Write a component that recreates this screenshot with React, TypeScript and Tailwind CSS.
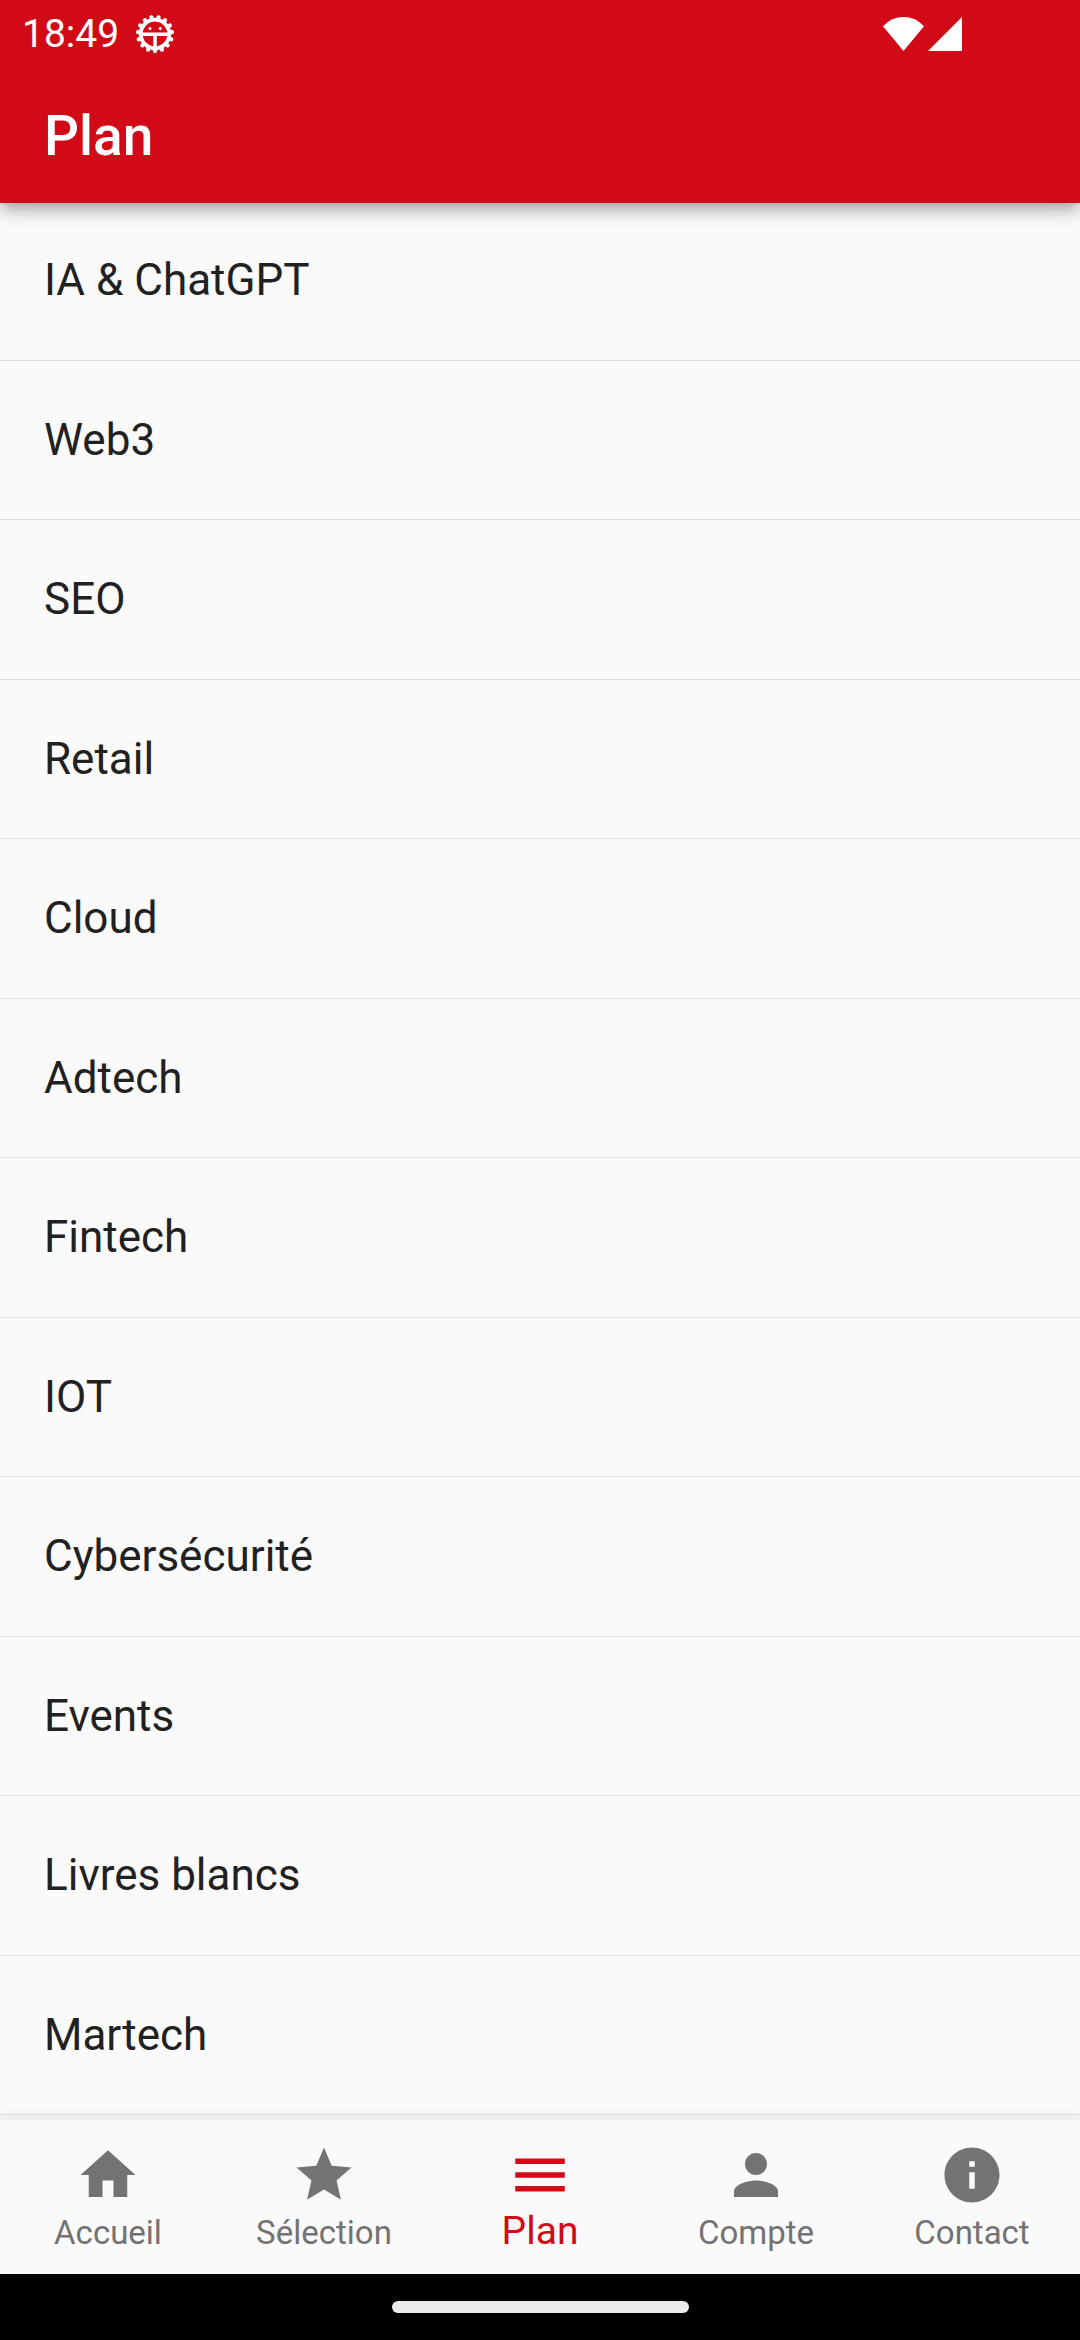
import { useState } from 'react';
import type { IconType } from 'react-icons';
import { MdHome, MdInfo, MdMenu, MdPerson, MdStar } from 'react-icons/md';

const CATEGORIES = [
  'IA & ChatGPT',
  'Web3',
  'SEO',
  'Retail',
  'Cloud',
  'Adtech',
  'Fintech',
  'IOT',
  'Cybersécurité',
  'Events',
  'Livres blancs',
  'Martech',
];

const TABS: { label: string; icon: IconType }[] = [
  { label: 'Accueil', icon: MdHome },
  { label: 'Sélection', icon: MdStar },
  { label: 'Plan', icon: MdMenu },
  { label: 'Compte', icon: MdPerson },
  { label: 'Contact', icon: MdInfo },
];

const GEAR_TEETH = Array.from({ length: 15 }, (_, i) => i * 24);

function GearIcon() {
  return (
    <svg viewBox="0 0 40 40" className="h-10 w-10" fill="none" stroke="currentColor" aria-hidden="true">
      <circle cx="20" cy="20" r="14.3" strokeWidth="3.8" />
      {GEAR_TEETH.map((angle) => (
        <path
          key={angle}
          d="M20 34.5V37.1"
          strokeWidth="4.2"
          strokeLinecap="round"
          transform={`rotate(${angle} 20 20)`}
        />
      ))}
      <path d="M6 20.2H34M20 20V36" strokeWidth="3.6" />
      <circle cx="15" cy="14.5" r="1.5" fill="currentColor" stroke="none" />
      <circle cx="25.2" cy="14.5" r="1.5" fill="currentColor" stroke="none" />
    </svg>
  );
}

function StatusBar() {
  return (
    <div className="flex h-[66px] items-center justify-between pt-0.5 pr-[118px] pl-[22px]">
      <div className="flex items-center gap-4">
        <span className="text-[39px] leading-[48px]">18:49</span>
        <GearIcon />
      </div>
      <div className="flex items-center gap-1">
        <svg viewBox="0 0 41 34" className="h-[34px] w-[41px]" fill="currentColor" aria-hidden="true">
          <path d="M20.5 34L0 9.3Q8.5 0 20.5 0T41 9.3z" />
        </svg>
        <svg viewBox="0 0 34 34" className="h-[34px] w-[34px]" fill="currentColor" aria-hidden="true">
          <path d="M34 0V34H0z" />
        </svg>
      </div>
    </div>
  );
}

function BottomNav() {
  const [active, setActive] = useState('Plan');

  return (
    <nav className="sticky bottom-0 z-10 shadow-[0_0_16px_rgba(0,0,0,0.12)]">
      <div className="grid h-[154px] grid-cols-5 bg-[#fafafa]">
        {TABS.map(({ label, icon: Icon }) => {
          const selected = label === active;
          return (
            <button
              key={label}
              type="button"
              onClick={() => setActive(label)}
              aria-current={selected ? 'page' : undefined}
              className={`flex flex-col items-center pt-[22px] ${selected ? 'text-[#d20a17]' : 'text-[#737373]'}`}
            >
              <Icon className="h-[66px] w-[66px]" />
              <span className={selected ? 'text-[39px] leading-[46px]' : 'text-[33px] leading-[50px]'}>
                {label}
              </span>
            </button>
          );
        })}
      </div>
      <div className="flex h-[66px] items-center justify-center bg-black">
        <div className="h-3 w-[297px] rounded-full bg-[#ebebeb]" />
      </div>
    </nav>
  );
}

export default function App() {
  return (
    <div className="flex min-h-screen flex-col bg-[#fafafa] font-[Roboto,sans-serif]">
      <header className="relative z-10 -mb-0.5 bg-[#d20a17] text-white shadow-[0_5px_11px_-3px_rgba(0,0,0,0.2),0_11px_14px_0_rgba(0,0,0,0.14),0_3px_28px_0_rgba(0,0,0,0.1)]">
        <StatusBar />
        <div className="flex h-[137px] items-center px-11 pt-0.5">
          <h1 className="text-[55px] leading-[64px] font-medium">Plan</h1>
        </div>
      </header>

      <main className="flex flex-1 flex-col pb-[5px]">
        <ul className="flex flex-1 flex-col">
          {CATEGORIES.map((name) => (
            <li key={name} className="flex flex-1 border-b border-[#e0e0e0]">
              <a href="#" className="flex flex-1 items-center px-11 text-[44px] leading-[52px] text-[#212121]">
                {name}
              </a>
            </li>
          ))}
        </ul>
      </main>

      <BottomNav />
    </div>
  );
}
